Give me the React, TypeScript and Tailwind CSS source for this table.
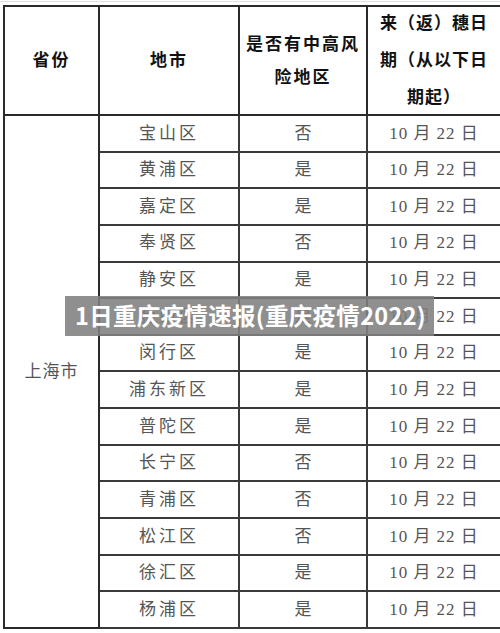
import React from "react";

const rows: [string, string][] = [
  ["宝山区", "否"],
  ["黄浦区", "是"],
  ["嘉定区", "是"],
  ["奉贤区", "否"],
  ["静安区", "是"],
  ["金山区", "是"],
  ["闵行区", "是"],
  ["浦东新区", "是"],
  ["普陀区", "是"],
  ["长宁区", "否"],
  ["青浦区", "否"],
  ["松江区", "否"],
  ["徐汇区", "是"],
  ["杨浦区", "是"],
];

const serif = "font-['Liberation_Serif','Noto_Sans_CJK_SC',serif]";

export default function App() {
  return (
    <div className="relative w-[500px] h-[633px] bg-white overflow-hidden">
      <div className="h-[1px] mt-[1px] bg-[#e2e2e2]" />
      <div className="pt-[3px] pl-[3px]">
        <div
          className={`grid w-[497px] h-[624px] grid-cols-[95px_140px_128px_134px] grid-rows-[109px_repeat(14,1fr)] border-l-2 border-t-2 border-[#2a2a2a] ${serif}`}
        >
          <div className="border-r-2 border-b-2 border-[#2a2a2a] flex items-center justify-center font-bold text-[17px] text-[#111] tracking-[2px]">
            省份
          </div>
          <div className="border-r-2 border-b-2 border-[#2a2a2a] flex items-center justify-center font-bold text-[17px] text-[#111] tracking-[2px]">
            地市
          </div>
          <div className="border-r-2 border-b-2 border-[#2a2a2a] flex flex-col items-center justify-center font-bold text-[17px] text-[#111] leading-[33px] tracking-[2px]">
            <span>是否有中高风</span>
            <span>险地区</span>
          </div>
          <div className="border-r-2 border-b-2 border-[#2a2a2a] flex flex-col items-center justify-center font-bold text-[17px] text-[#111] leading-[37px] tracking-[1px]">
            <span>来（返）穗日</span>
            <span>期（从以下日</span>
            <span>期起）</span>
          </div>
          <div className="row-span-14 border-r-2 border-b-2 border-[#2a2a2a] flex items-center justify-center text-[17px] text-[#555] tracking-[1px]">
            上海市
          </div>
          {rows.map(([d, r], i) => (
            <React.Fragment key={i}>
              <div className="border-r-2 border-b-2 border-[#3a3a3a] flex items-center justify-center text-[17px] text-[#555] tracking-[3px]">
                {d}
              </div>
              <div className="border-r-2 border-b-2 border-[#3a3a3a] flex items-center justify-center text-[17px] text-[#555]">
                {r}
              </div>
              <div className="border-r-2 border-b-2 border-[#3a3a3a] flex items-center justify-center text-[17px] text-[#555] tracking-[1px] whitespace-pre">
                {"10 月 22 日"}
              </div>
            </React.Fragment>
          ))}
        </div>
      </div>
      <div className="absolute left-[65px] top-[296px] w-[369px] h-[40px] bg-[rgba(128,128,128,0.88)] flex items-center pl-[10px]">
        <span className="text-white font-bold text-[23.5px] leading-none font-['Noto_Sans_CJK_SC',sans-serif] tracking-[0.3px]">
          1日重庆疫情速报(重庆疫情2022)
        </span>
      </div>
    </div>
  );
}
